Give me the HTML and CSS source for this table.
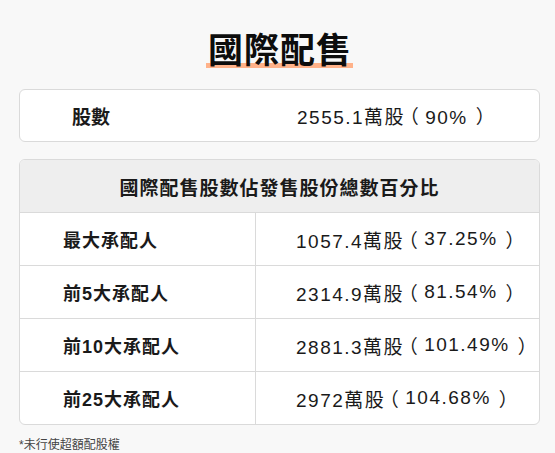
FILE: index.html
```html
<!DOCTYPE html>
<html lang="zh-Hant">
<head>
<meta charset="utf-8">
<link rel="stylesheet" href="styles.css">
</head>
<body>
<main class="page">
  <div class="title-wrap"><h1 class="title">國際配售</h1></div>
  <section class="summary">
    <div class="summary-label">股數</div>
    <div class="summary-value">2555.1萬股<span class="po">（</span>90%<span class="pc">）</span></div>
  </section>
  <section class="table">
    <div class="table-head">國際配售股數佔發售股份總數百分比</div>
    <div class="row">
      <div class="cell label">最大承配人</div>
      <div class="cell value">1057.4萬股<span class="po">（</span>37.25%<span class="pc">）</span></div>
    </div>
    <div class="row">
      <div class="cell label">前5大承配人</div>
      <div class="cell value">2314.9萬股<span class="po">（</span>81.54%<span class="pc">）</span></div>
    </div>
    <div class="row">
      <div class="cell label">前10大承配人</div>
      <div class="cell value">2881.3萬股<span class="po">（</span>101.49%<span class="pc">）</span></div>
    </div>
    <div class="row">
      <div class="cell label">前25大承配人</div>
      <div class="cell value">2972萬股<span class="po">（</span>104.68%<span class="pc">）</span></div>
    </div>
  </section>
  <p class="note">*未行使超額配股權</p>
</main>
</body>
</html>
```

FILE: styles.css
```css
html, body {
  margin: 0;
  padding: 0;
  background: #f8f8f8;
}
body {
  font-family: "Liberation Sans", "Noto Sans CJK TC", sans-serif;
  color: #1a1a1a;
}
.page {
  width: 521px;
  padding: 0 0 0 19px;
}
.title-wrap {
  text-align: center;
  padding-top: 31px;
  height: 40px;
  margin-bottom: 18px;
}
.title {
  display: inline-block;
  margin: 0;
  font-size: 35px;
  line-height: 40px;
  font-weight: 700;
  color: #0d0d0d;
  letter-spacing: 1px;
  padding: 0 1px 0 2px;
  background: linear-gradient(#ffb28a, #ffb28a) 0 32px / 100% 5px no-repeat;
}
.summary {
  display: grid;
  grid-template-columns: 236px 1fr;
  height: 51px;
  align-items: center;
  background: #fff;
  border: 1px solid #dadada;
  border-radius: 6px;
  font-size: 19px;
}
.summary-label {
  padding-left: 52px;
  font-weight: 600;
}
.summary-value {
  padding-left: 41px;
  letter-spacing: 1.5px;
}
.po,
.pc {
  font-feature-settings: "halt";
}
.po {
  margin-left: 4px;
  margin-right: 5px;
}
.pc {
  margin-left: 8px;
  margin-right: 1px;
}
.table {
  margin-top: 17px;
  background: #fff;
  border: 1px solid #dadada;
  border-radius: 6px;
  overflow: hidden;
}
.table-head {
  height: 52px;
  display: flex;
  align-items: center;
  justify-content: center;
  background: #eeeeee;
  font-size: 19px;
  font-weight: 600;
  letter-spacing: 1px;
  border-bottom: 1px solid #dadada;
}
.row {
  display: grid;
  grid-template-columns: 236px 1fr;
  height: 52px;
  border-bottom: 1px solid #dadada;
}
.row:last-child {
  border-bottom: 0;
}
.cell {
  display: flex;
  align-items: center;
}
.label {
  padding-left: 43px;
  font-size: 18px;
  font-weight: 700;
  letter-spacing: 1px;
  border-right: 1px solid #dadada;
}
.value {
  padding-left: 40px;
  font-size: 19px;
  letter-spacing: 1.5px;
}
.note {
  margin: 10px 0 0 0;
  font-size: 12px;
  color: #444;
}
```
